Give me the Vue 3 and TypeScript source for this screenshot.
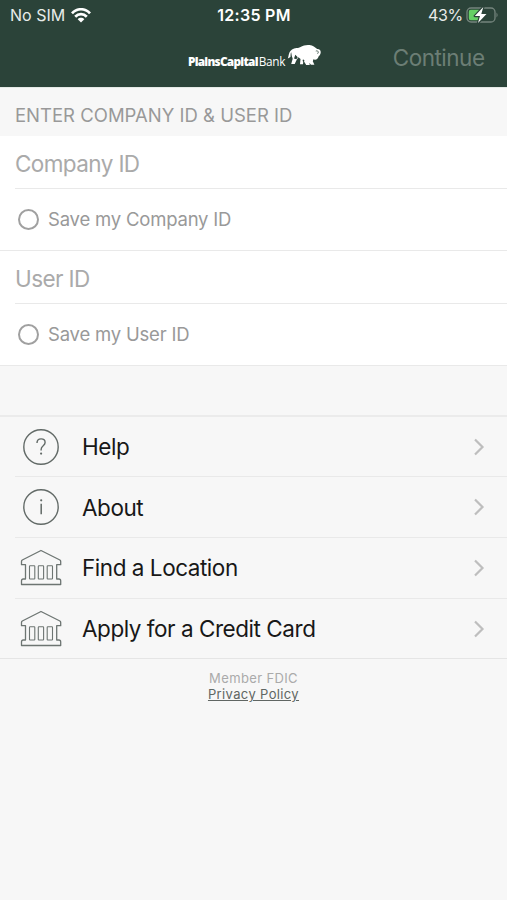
<script setup lang="ts">
import { ref } from 'vue'

interface Field {
  id: string
  label: string
  saveLabel: string
}

interface MenuItem {
  label: string
  icon: 'help' | 'info' | 'bank'
  kind: string
}

const fields: Field[] = [
  { id: 'company', label: 'Company ID', saveLabel: 'Save my Company ID' },
  { id: 'user', label: 'User ID', saveLabel: 'Save my User ID' },
]

const menu: MenuItem[] = [
  { label: 'Help', icon: 'help', kind: 'help' },
  { label: 'About', icon: 'info', kind: 'about' },
  { label: 'Find a Location', icon: 'bank', kind: 'location' },
  { label: 'Apply for a Credit Card', icon: 'bank', kind: 'apply' },
]

const saved = ref<Record<string, boolean>>({ company: false, user: false })

function toggle(id: string): void {
  saved.value[id] = !saved.value[id]
}
</script>

<template>
  <main class="screen">
    <header class="top">
      <div class="status">
        <div class="status-left">
          <span class="carrier">No SIM</span>
          <svg class="wifi" width="20" height="15" viewBox="0 0 20 15">
            <g fill="none" stroke="#fff" stroke-width="2.7">
              <path d="M1 5.3C6-.1 14-.1 19 5.3" />
              <path d="M4.2 8.800c3.300-3.500 8.300-3.500 11.600 0" />
            </g>
            <path d="M6.700 11.200c1.800-1.800 4.800-1.800 6.600 0L10 14.600z" fill="#fff" />
          </svg>
        </div>
        <span class="clock">12:35 PM</span>
        <div class="status-right">
          <span class="percent">43%</span>
          <svg class="battery" width="33" height="18" viewBox="0 0 33 18">
            <rect x="1" y="2" width="28" height="14" rx="4" fill="none" stroke="#75857d" stroke-width="1.300" />
            <path d="M30.500 6.500q2.200 2.500 0 5z" fill="#75857d" />
            <path d="M4.700 3.800h8.800v10.400H4.700a1.900 1.900 0 0 1-1.900-1.900V5.700a1.900 1.900 0 0 1 1.900-1.900z" fill="#65cf65" />
            <path d="M17.300 1 8.800 10h5.200l-2 7L20.500 8h-5.200z" fill="#fff" stroke="#2b4339" stroke-width="2.400" paint-order="stroke" stroke-linejoin="round" />
          </svg>
        </div>
      </div>
      <div class="nav">
        <div class="brand">
          <span class="brand-name"><b>PlainsCapital</b><span class="thin">Bank</span></span>
          <svg class="bison" width="35" height="23" viewBox="0 0 35 23">
            <path fill="#fff" d="M4.200 6.300C6.400 4 10 4.500 13 3.300 16.500 1.300 19 .7 22.500 1c3.500.4 5.500 2.200 7.700 4.100 1.900-.2 3.200.8 3.500 2.600.3 1.700-.8 3.500-2 4.600-.5 2-2 3.500-3.800 3.400-.6 0-1-.1-1.500-.4l-.6 2 1.600 3.500h-3.500l-1.500-2 .3 2.200h-3.500l-2.800-4.400-.4 3.700h-3l.5-5.200-2-1.800-1.800 2.500-2 4.200H4.200l1.500-5.200L4.800 12l-.6-3.700c-.5.4-.6 2-.7 4.700L.8 14.600c1.200-2.400.4-5.700 3.400-8.300z" />
            <path d="M7 14.600 8.300 10.800 10.800 13.300 9.300 15.200zM16 15.300l1.500 1.200-.7 1.500-1.200-.9z" fill="#2b4339" />
            <path d="M28.800 7.100c1.500-.8 2.900.1 2.400 1.900l-.8.800" fill="none" stroke="#52675d" stroke-width=".9" />
          </svg>
        </div>
        <span class="continue">Continue</span>
      </div>
    </header>

    <h1 class="section-title"><span>ENTER COMPANY ID &amp; USER ID</span></h1>

    <section class="form">
      <div v-for="field in fields" :key="field.id" class="field" :class="field.id">
        <div class="entry"><span>{{ field.label }}</span></div>
        <div class="save" role="checkbox" :aria-checked="saved[field.id]" @click="toggle(field.id)">
          <i class="radio" :class="{ on: saved[field.id] }"></i>
          <span class="save-text">{{ field.saveLabel }}</span>
        </div>
      </div>
    </section>

    <nav class="menu">
      <div v-for="item in menu" :key="item.label" class="row">
        <div class="row-icon">
          <svg v-if="item.icon === 'bank'" width="42" height="37" viewBox="0 0 42 37" fill="none" stroke="#6d7572" stroke-width="1.300" stroke-linejoin="round">
            <path d="M21 1.500 2.300 11q-.8.500-.8 1.500v3.200h4V30H3.300q-1.800 0-1.800 2v3.500h39.200V32q0-2-1.800-2h-2.200V15.700h4v-3.200q0-1-.8-1.500z" />
            <g stroke-width="1.100">
              <rect x="9.500" y="16.800" width="5.300" height="13.200" rx=".6" />
              <rect x="18.300" y="16.800" width="5.300" height="13.200" rx=".6" />
              <rect x="27.200" y="16.800" width="5.300" height="13.200" rx=".6" />
            </g>
          </svg>
          <svg v-else width="38" height="38" viewBox="0 0 38 38" fill="none" stroke="#626a67" stroke-width="1.400">
            <circle cx="19" cy="19" r="17.200" />
            <template v-if="item.icon === 'help'">
              <path d="M15 15c0-2.600 1.600-4.100 4.100-4.100 2.400 0 4 1.400 4 3.500 0 1.800-1.100 2.600-2.200 3.600-1.200 1-1.800 1.700-1.800 3.700v.9" />
              <circle cx="19.100" cy="25.600" r="1.100" fill="#626a67" stroke="none" />
            </template>
            <template v-else>
              <path d="M19.200 15.800V26.300" stroke-width="1.500" />
              <circle cx="19.200" cy="12.300" r="1.100" fill="#626a67" stroke="none" />
            </template>
          </svg>
        </div>
        <div class="row-body">
          <span class="row-label" :class="item.kind">{{ item.label }}</span>
          <svg class="chevron" width="12" height="18" viewBox="0 0 12 18">
            <path d="M2 1.500l7.500 7.500L2 16.500" fill="none" stroke="#bebebe" stroke-width="2.200" />
          </svg>
        </div>
      </div>
    </nav>

    <footer class="foot">
      <span class="fdic">Member FDIC</span>
      <span class="privacy">Privacy Policy</span>
    </footer>
  </main>
</template>

<style>
body {
  margin: 0;
  background: #f7f7f7;
}
</style>

<style scoped>
.screen {
  box-sizing: border-box;
  width: 507px;
  height: 900px;
  overflow: hidden;
  background: #f7f7f7;
  font-family: Inter, "Liberation Sans", sans-serif;
  white-space: nowrap;
}
.top {
  height: 87px;
  background: #2b4339;
  color: #fff;
}
.status {
  display: grid;
  grid-template-columns: 1fr auto 1fr;
  align-items: center;
  height: 30px;
  padding: 0 8px 0 10px;
  font-size: 16px;
  line-height: 30px;
}
.status-left,
.status-right {
  display: flex;
  align-items: center;
  height: 29px;
}
.status-left {
  gap: 6px;
  color: #e8ecea;
}
.status-right {
  justify-content: flex-end;
  gap: 3px;
  color: #e8ecea;
}
.percent {
  letter-spacing: -0.3px;
}
.clock {
  font-weight: 600;
  font-size: 16px;
  letter-spacing: 0.3px;
  margin-right: 1px;
}
.nav {
  display: grid;
  grid-template-columns: 1fr auto;
  align-items: center;
  height: 57px;
  padding: 0 23px 2px 188px;
  box-sizing: border-box;
}
.brand {
  display: flex;
  align-items: center;
  height: 23px;
  gap: 2px;
}
.brand-name {
  padding-top: 6px;
  font-family: "Open Sans", sans-serif;
  font-size: 11.8px;
  line-height: 16px;
  letter-spacing: -0.6px;
}
.brand-name b {
  font-weight: 800;
  letter-spacing: -0.75px;
}
.thin {
  margin-left: 1px;
  letter-spacing: -0.3px;
}
.bison {
  margin-top: -4px;
}
.continue {
  font-size: 22.5px;
  letter-spacing: -0.5px;
  margin-right: -0.5px;
  color: #6c7e75;
}
.section-title {
  display: flex;
  align-items: center;
  box-sizing: border-box;
  height: 49px;
  margin: 0;
  padding: 6px 15px 0;
  border-top: 1px solid #e4e9e6;
  font-size: 18.5px;
  font-weight: 400;
  color: #999;
}
.form {
  background: #fff;
}
.field {
  box-sizing: border-box;
  height: 115px;
  border-bottom: 1px solid #e9e9e9;
}
.entry {
  display: flex;
  align-items: center;
  box-sizing: border-box;
  height: 53px;
  margin-left: 15px;
  padding-top: 2px;
  border-bottom: 1px solid #e9e9e9;
  font-size: 22.5px;
  letter-spacing: -0.6px;
  color: #aaa;
}
.save {
  display: flex;
  align-items: center;
  height: 61px;
  padding-left: 18px;
  gap: 9px;
  font-size: 18.5px;
  letter-spacing: -0.2px;
  color: #999;
}
.save-text {
  margin-top: -1px;
}
.radio {
  box-sizing: border-box;
  width: 21px;
  height: 21px;
  border: 2px solid #a0a0a0;
  border-radius: 50%;
}
.radio.on {
  background: #2b4339;
}
.menu {
  margin-top: 49px;
  border-top: 2px solid #ebebeb;
  border-bottom: 1px solid #e5e5e5;
}
.row {
  display: flex;
  box-sizing: border-box;
  height: 60.700px;
  padding-left: 15px;
}
.row:first-child {
  height: 59.400px;
}
.row-icon {
  display: flex;
  align-items: center;
  justify-content: center;
  width: 52px;
}
.row-body {
  display: flex;
  flex: 1;
  align-items: center;
  justify-content: space-between;
  padding: 0 22px 0 15px;
}
.row + .row .row-icon,
.row + .row .row-body {
  border-top: 1px solid #e9e9e9;
}
.row-label {
  font-size: 22.5px;
  letter-spacing: -0.46px;
  color: #181818;
}
.foot {
  display: flex;
  flex-direction: column;
  align-items: center;
  padding-top: 12px;
  font-size: 13px;
  letter-spacing: 0.36px;
  line-height: 15.500px;
}
.fdic {
  color: #aaa;
}
.privacy {
  color: #606663;
  text-decoration: underline;
}
</style>
